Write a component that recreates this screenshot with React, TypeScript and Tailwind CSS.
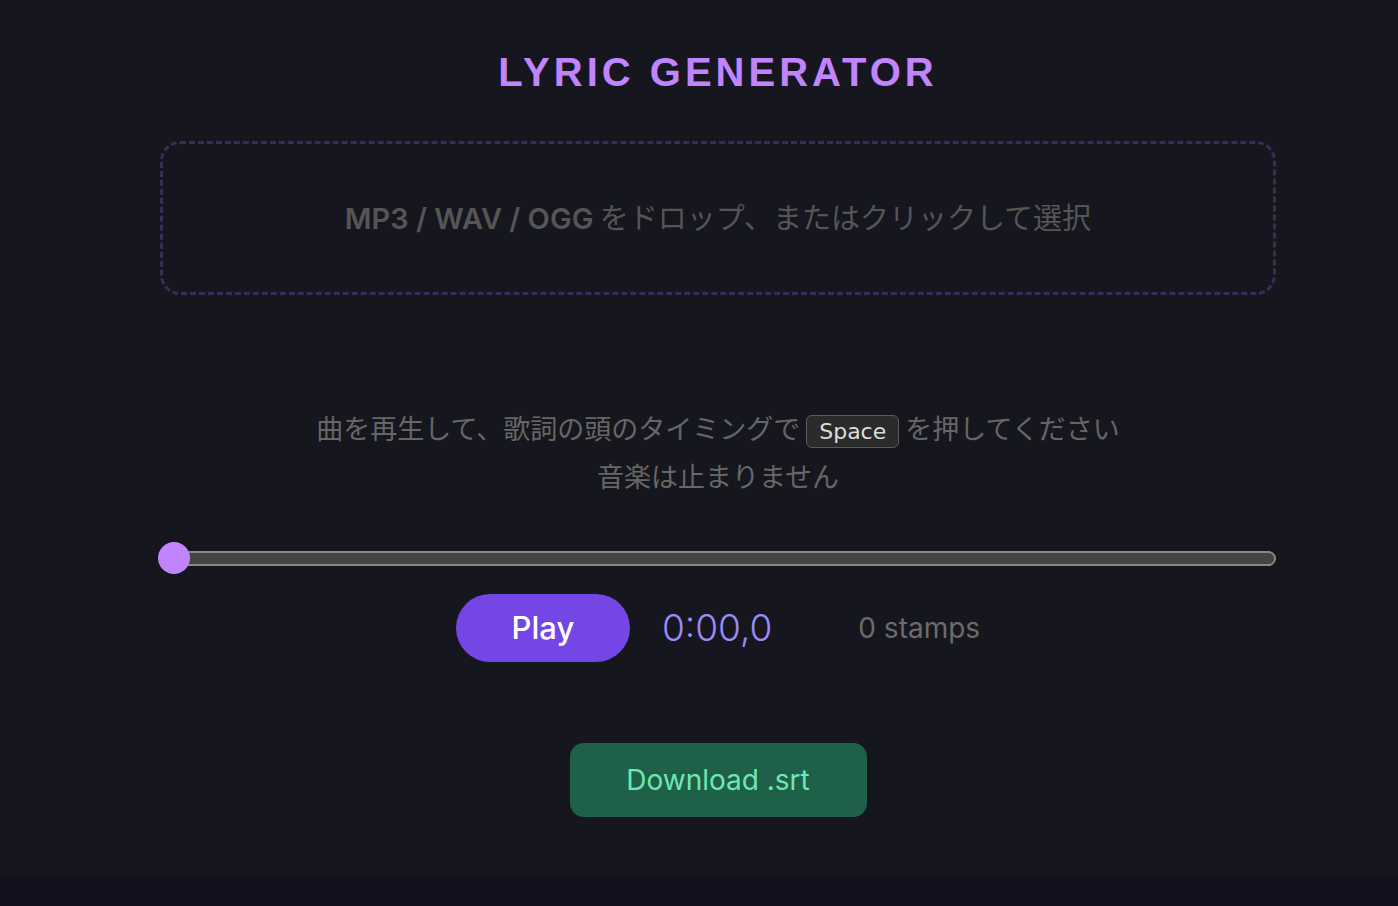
import React from "react"

const latin = "font-['Inter','Noto_Sans_CJK_JP',sans-serif]"
const jp = "font-['Noto_Sans_CJK_JP','Noto_Sans',sans-serif]"

export default function App() {
  return (
    <div className="min-h-screen bg-[#12111f]">
      <div className="h-[875px] bg-[#16161f] pl-[160px] pr-[122px]">
        {/* header */}
        <h1
          className={`pt-[50px] text-center text-[40px] font-bold leading-[44px] tracking-[0.1em] text-[#c084fc] font-['Liberation_Sans',sans-serif]`}>
          LYRIC GENERATOR
        </h1>

        {/* dropzone */}
        <div className="mt-[47px] flex h-[154px] cursor-pointer items-center justify-center rounded-[20px] border-[3px] border-dashed border-[#342f57]">
          <p className={`text-[29px] text-[#555] ${jp}`}>
            <span className={`font-semibold ${latin}`}>MP3 / WAV / OGG</span>{" "}
            をドロップ、またはクリックして選択
          </p>
        </div>

        {/* hint */}
        <div className={`mt-[109px] text-center text-[27px] leading-[48px] text-[#666] ${jp}`}>
          <p>
            曲を再生して、歌詞の頭のタイミングで{" "}
            <kbd
              className={`inline-block rounded-md border-[1.5px] border-[#5a5a5a] bg-[#2b2b2b] px-[12px] align-middle text-[22px] leading-[31px] text-[#ddd] font-['DejaVu_Sans',sans-serif]`}>
              Space
            </kbd>{" "}
            を押してください
          </p>
          <p>音楽は止まりません</p>
        </div>

        {/* seek bar */}
        <div className="relative mt-[42px] flex h-[32px] items-center">
          <div className="h-[15px] w-full rounded-full border-2 border-[#888] bg-[#444]" />
          <div className="absolute left-[-2px] top-0 h-[32px] w-[32px] rounded-full bg-[#c084fc]" />
        </div>

        {/* controls */}
        <div className={`mt-[20px] flex items-center justify-center ${latin}`}>
          <button className="h-[68px] w-[174px] rounded-full bg-[#7446e5] text-[31px] font-medium text-white">
            Play
          </button>
          <span className="ml-[32px] text-[37px] font-light text-[#9b8af7]">0:00,0</span>
          <span className="ml-[86px] text-[28px] text-[#6b6b6b]">0 stamps</span>
        </div>

        {/* download */}
        <div className="mt-[81px] flex justify-center">
          <button
            className={`h-[74px] w-[297px] rounded-[14px] bg-[#1f6049] text-[28px] text-[#6ee7b7] ${latin}`}>
            Download .srt
          </button>
        </div>
      </div>
    </div>
  )
}
